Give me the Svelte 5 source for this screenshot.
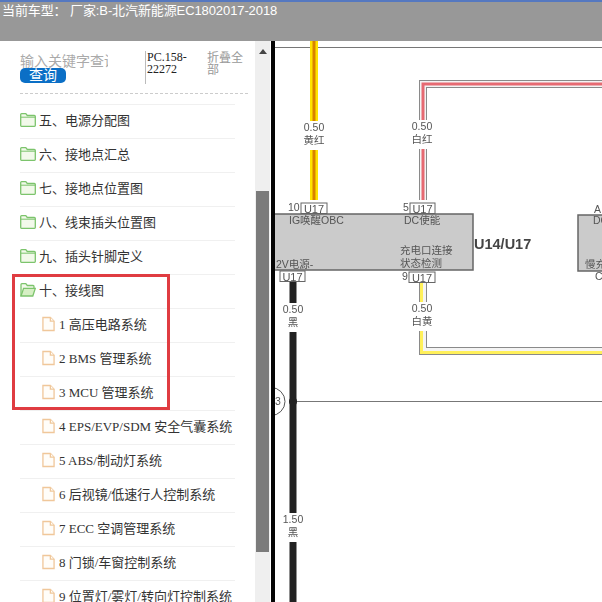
<script>
  const folders = ['五、电源分配图', '六、接地点汇总', '七、接地点位置图', '八、线束插头位置图', '九、插头针脚定义'];
  const files = [
    '1 高压电路系统', '2 BMS 管理系统', '3 MCU 管理系统', '4 EPS/EVP/SDM 安全气囊系统',
    '5 ABS/制动灯系统', '6 后视镜/低速行人控制系统', '7 ECC 空调管理系统', '8 门锁/车窗控制系统', '9 位置灯/雾灯/转向灯控制系统'
  ];
  const labels = [
    { x: 314, a: '0.50', b: '黄红', y: 131 },
    { x: 422, a: '0.50', b: '白红', y: 130 },
    { x: 293, a: '0.50', b: '黑', y: 313 },
    { x: 422, a: '0.50', b: '白黄', y: 312 },
    { x: 293, a: '1.50', b: '黑', y: 523 }
  ];
  const pins = [
    { x: 301, y: 203, w: 26, n: '10', nx: 288 },
    { x: 410, y: 203, w: 25, n: '5', nx: 403 },
    { x: 280, y: 271, w: 25, n: '', nx: 0 },
    { x: 409, y: 272, w: 26, n: '9', nx: 402 }
  ];
  const redPath = 'M423 200V84H602';
  const yellowPath = 'M423 281V351H602';
  const yellowInner = 'M421.5 281V352.5H602';
</script>

<div class="page">
  <header class="top">当前车型： 厂家:B-北汽新能源EC1802017-2018</header>
  <div class="main">
    <aside class="side">
      <div class="search">
        <div class="query">
          <div class="placeholder">输入关键字查询</div>
          <button class="btn">查询</button>
        </div>
        <div class="code">PC.158-22272</div>
        <div class="fold">折叠全部</div>
      </div>
      <ul class="tree">
        {#each folders as f}
          <li class="row">
            <svg class="ico" viewBox="0 0 16 14"><path class="folder" d="M.7 12.6V1.6q0-.9.9-.9h4.2l1.5 1.8h7q1 0 1 1v9.1q0 .7-.8.7H1.4q-.7 0-.7-.7z"/><path class="fline" d="M.7 4.2h14.6"/></svg>
            <span>{f}</span>
          </li>
        {/each}
        <li class="row">
          <svg class="ico" viewBox="0 0 16 14"><path class="folder" d="M1 13V1.6q0-.9.9-.9h3.9l1.5 1.8h5.8q.9 0 .9 1v1.7"/><path class="open" d="M1 13l2.6-7.6h11.7L12.8 13z"/></svg>
          <span>十、接线图</span>
        </li>
        {#each files as f}
          <li class="row sub">
            <svg class="doc" viewBox="0 0 14 16"><path d="M1 1h8l4 4v10H1z"/><path d="M9 1v4h4"/></svg>
            <span>{f}</span>
          </li>
        {/each}
      </ul>
      <div class="mark"></div>
    </aside>
    <div class="bar">
      <div class="arrow"></div>
      <div class="thumb"></div>
    </div>
    <div class="rule"></div>
    <div class="canvas">
      <svg class="dia" viewBox="275 41 327 561">
        <path class="thin" d="M275 47.5H602"/>

        <path class="wy1" d="M314 41V200"/>
        <path class="wy2" d="M314 41V200"/>

        <path class="wg" d={redPath}/>
        <path class="wp" d={redPath}/>
        <path class="wr" d={redPath}/>

        <path class="wg" d={yellowPath}/>
        <path class="wp" d={yellowPath}/>
        <path class="wl" d={yellowInner}/>
        <path class="wk" d="M293 281V602"/>

        <path class="thin" d="M293 401.5H602"/>
        <circle class="dot" cx="293" cy="401.5" r="4"/>
        <circle class="ring" cx="271" cy="401.5" r="14"/>
        <text class="t" x="275" y="405">3</text>

        {#each labels as l}
          <rect class="mask" x={l.x - 14} y={l.y - 10} width="28" height="29"/>
          <text class="t mid" x={l.x} y={l.y}>{l.a}</text>
          <text class="t mid" x={l.x} y={l.y + 13}>{l.b}</text>
        {/each}

        <rect class="box" x="270" y="214" width="203" height="56"/>
        <rect class="box" x="578" y="215" width="40" height="56"/>

        {#each pins as p}
          <rect class="pin" x={p.x} y={p.y} width={p.w} height="10.5"/>
          <text class="u c" x={p.x + p.w / 2} y={p.y + 9.5}>U17</text>
          {#if p.n}<text class="t" x={p.nx} y={p.y + 8}>{p.n}</text>{/if}
        {/each}

        <text class="t" x="289" y="224">IG唤醒OBC</text>
        <text class="t" x="404" y="224">DC使能</text>
        <text class="t" x="400" y="254">充电口连接</text>
        <text class="t" x="400" y="267">状态检测</text>
        <text class="t" x="276" y="268">2V电源-</text>
        <text class="name" x="474" y="249">U14/U17</text>
        <text class="t" x="594" y="213">A</text>
        <text class="t" x="593" y="224">DC</text>
        <text class="t" x="585" y="268">慢充</text>
        <text class="t" x="595" y="280">C</text>
      </svg>
    </div>
  </div>
</div>

<style>
  :global(body) { margin: 0; background: #fff; overflow: hidden; }
  .page { width: 602px; height: 602px; display: flex; flex-direction: column; overflow: hidden; font-family: "Liberation Sans", "Noto Sans CJK SC", sans-serif; }
  .top { height: 39px; flex: none; background: #989898; border-top: 2px solid #5578c0; color: #fff; font-size: 13px; letter-spacing: -0.1px; line-height: 18px; padding-left: 2px; white-space: nowrap; }
  .main { flex: 1; min-height: 0; display: flex; }
  .side { position: relative; width: 255px; flex: none; overflow: hidden; padding-top: 10px; box-sizing: border-box; background: #fff; }
  .search { display: flex; height: 42px; margin-left: 20px; margin-right: 7px; border-bottom: 1px dashed #ccc; }
  .query { width: 88px; flex: none; margin-right: 38px; padding-top: 1px; }
  .placeholder { width: 88px; overflow: hidden; white-space: nowrap; color: #aaa; font-size: 14px; line-height: 18px; height: 18px; }
  .btn { display: block; width: 46px; height: 15px; margin: -2px 0 0; padding: 0; border: 0; border-radius: 5px; background: #0b6fc6; color: #fff; font: 14px/15px "Liberation Sans", "Noto Sans CJK SC", sans-serif; }
  .code { width: 48px; margin-left: -1px; padding-left: 1px; margin-right: 14px; height: 33px; border-left: 1px solid #bbb; font: 12px/12px "Liberation Serif", "Noto Sans CJK SC", serif; color: #222; box-sizing: border-box; }
  .fold { width: 38px; padding-top: 1px; color: #999; font-size: 12px; line-height: 12px; }
  .tree { list-style: none; margin: 10px 0 0 20px; padding: 0; width: 215px; }
  .row { height: 34px; box-sizing: border-box; border-top: 1px solid #f0f0f0; padding-bottom: 3px; display: flex; align-items: center; gap: 3px; font: 13px/1 "Liberation Serif", "Noto Sans CJK SC", serif; color: #333; white-space: nowrap; }
  .sub { padding-left: 22px; gap: 4px; }
  .ico { width: 16px; height: 14px; flex: none; }
  .folder { fill: #f2f9ea; stroke: #7cc46c; stroke-width: 1.3; }
  .fline { fill: none; stroke: #7cc46c; stroke-width: 1; }
  .open { fill: #d6efc4; stroke: #7cc46c; stroke-width: 1.3; }
  .doc { width: 13px; height: 16px; flex: none; fill: #fffdf9; stroke: #f0c79a; stroke-width: 1.4; }
  .mark { position: absolute; left: 12px; top: 233px; width: 152px; height: 130px; border: 3px solid #e03c41; pointer-events: none; }
  .bar { width: 15px; flex: none; background: #efefef; position: relative; box-sizing: border-box; margin-right: 1px; padding-top: 150px; }
  .arrow { position: absolute; left: 4px; top: 8px; border: 4px solid transparent; border-top: 0; border-bottom: 5px solid #444; }
  .thumb { height: 361px; background: #7b7b7b; margin-left: 1px; width: 13px; }
  .rule { width: 4px; flex: none; background: #050505; }
  .canvas { flex: 1; min-width: 0; background: #fff; }
  .dia { display: block; width: 327px; height: 561px; filter: blur(0.3px); }
  .dia path { fill: none; }
  .thin { stroke: #777; stroke-width: 1; }
  .wy1 { stroke: #ffe300; stroke-width: 8; }
  .wy2 { stroke: #d98200; stroke-width: 3; }
  .wg { stroke: #8a8a8a; stroke-width: 8; }
  .wp { stroke: #f4f4f4; stroke-width: 6; }
  .wr { stroke: #e66a72; stroke-width: 3; }
  .wl { stroke: #fff05a; stroke-width: 3; }
  .wk { stroke: #222; stroke-width: 7; }
  .dot { fill: #222; }
  .ring { fill: #fff; stroke: #555; stroke-width: 1; }
  .mask { fill: #fff; }
  .box { fill: #cbcbcb; stroke: #666; stroke-width: 1.5; }
  .pin { fill: #fff; stroke: #666; stroke-width: 1; }
  .t { font-size: 10.5px; fill: #555; font-family: "Liberation Sans", "Noto Sans CJK SC", sans-serif; }
  .u { font-size: 11px; fill: #555; font-family: "Liberation Sans", sans-serif; }
  .mid, .c { text-anchor: middle; }
  .name { font-size: 14.5px; font-weight: 700; fill: #444; font-family: "Liberation Sans", sans-serif; }
</style>
